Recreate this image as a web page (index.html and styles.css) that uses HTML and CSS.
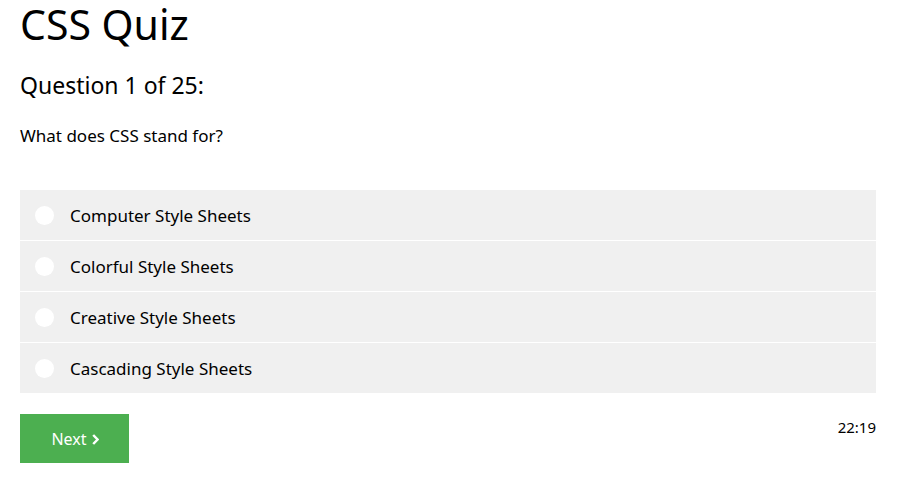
FILE: index.html
```html
<!DOCTYPE html>
<html>
<head>
<meta charset="utf-8">
<link rel="stylesheet" href="styles.css">
</head>
<body>
<div class="quiz">
  <h1 class="title">CSS Quiz</h1>
  <h2 class="qnum">Question 1 of 25:</h2>
  <p class="qtext">What does CSS stand for?</p>
  <div class="options">
    <label class="option"><span class="radio"></span><span class="label">Computer Style Sheets</span></label>
    <label class="option"><span class="radio"></span><span class="label">Colorful Style Sheets</span></label>
    <label class="option"><span class="radio"></span><span class="label">Creative Style Sheets</span></label>
    <label class="option"><span class="radio"></span><span class="label">Cascading Style Sheets</span></label>
  </div>
  <div class="footer">
    <button class="next">Next<svg class="chev" width="7" height="11" viewBox="0 0 7 11"><polyline points="1.2,1 5.6,5.5 1.2,10" fill="none" stroke="#fff" stroke-width="2.5"/></svg></button>
    <span class="timer">22:19</span>
  </div>
</div>
</body>
</html>
```
FILE: styles.css
```css
html, body {
  margin: 0;
  padding: 0;
  background: #fff;
}
body {
  font-family: "Noto Sans", "Open Sans", sans-serif;
  color: #000;
}
.quiz {
  width: 856px;
  padding: 0 20px;
}
.title {
  font-size: 41px;
  font-weight: 400;
  margin: 0;
  line-height: 48px;
}
.qnum {
  font-size: 23px;
  font-weight: 400;
  margin: 22px 0 0;
  line-height: 30px;
}
.qtext {
  font-size: 17px;
  margin: 24px 0 0;
  line-height: 24px;
}
.options {
  margin-top: 42px;
  display: flex;
  flex-direction: column;
  gap: 1px;
}
.option {
  height: 50px;
  background: #f0f0f0;
  display: flex;
  align-items: center;
  font-size: 17px;
}
.radio {
  width: 19px;
  height: 19px;
  border-radius: 50%;
  background: #fff;
  margin-left: 15px;
  margin-right: 16px;
}
.footer {
  margin-top: 21px;
  display: flex;
  justify-content: space-between;
  align-items: flex-start;
}
.next {
  width: 109px;
  height: 49px;
  background: #4caf50;
  color: #fff;
  border: none;
  font-family: inherit;
  font-size: 16px;
  padding: 0 0 0 1px;
  display: flex;
  align-items: center;
  justify-content: center;
  gap: 5px;
}
.chev {
  display: block;
  margin-top: 1px;
}
.timer {
  font-size: 15px;
  margin-top: 3px;
}
```
